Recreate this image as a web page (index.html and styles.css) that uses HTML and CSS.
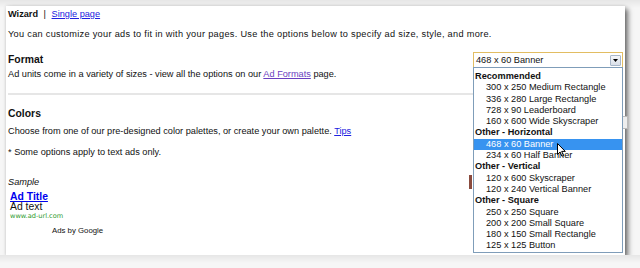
FILE: index.html
```html
<!DOCTYPE html>
<html lang="en">
<head>
    <meta charset="UTF-8">
    <title>Ad Wizard</title>
    <link rel="stylesheet" href="styles.css">
</head>
<body>
    <div class="page">
        <div class="nav"><b>Wizard</b> <span class="sep">|</span> <a href="#">Single page</a></div>
        <p class="intro">You can customize your ads to fit in with your pages. Use the options below to specify ad size, style, and more.</p>

        <div class="format-row">
            <h3>Format</h3>
            <div class="select">
                <span>468 x 60 Banner</span>
                <span class="arrow"><svg width="5" height="3" viewBox="0 0 5 3"><path d="M0 0h5L2.5 3z" fill="#000"/></svg></span>
            </div>
        </div>
        <p class="desc">Ad units come in a variety of sizes - view all the options on our <a class="visited" href="#">Ad Formats</a> page.</p>
        <div class="rule"></div>

        <h3 class="colors">Colors</h3>
        <p class="desc">Choose from one of our pre-designed color palettes, or create your own palette. <a href="#">Tips</a></p>
        <p class="note">* Some options apply to text ads only.</p>

        <p class="sample-label">Sample</p>
        <div class="sample">
            <a class="ad-title" href="#">Ad Title</a>
            <div class="ad-text">Ad text</div>
            <div class="ad-url">www.ad-url.com</div>
            <div class="ads-by">Ads by Google</div>
        </div>

        <div class="swatch"></div>
        <div class="behind-btn"></div>

        <ul class="dropdown">
            <li class="group">Recommended</li>
            <li>300 x 250 Medium Rectangle</li>
            <li>336 x 280 Large Rectangle</li>
            <li>728 x 90 Leaderboard</li>
            <li>160 x 600 Wide Skyscraper</li>
            <li class="group">Other - Horizontal</li>
            <li class="active">468 x 60 Banner</li>
            <li>234 x 60 Half Banner</li>
            <li class="group">Other - Vertical</li>
            <li>120 x 600 Skyscraper</li>
            <li>120 x 240 Vertical Banner</li>
            <li class="group">Other - Square</li>
            <li>250 x 250 Square</li>
            <li>200 x 200 Small Square</li>
            <li>180 x 150 Small Rectangle</li>
            <li>125 x 125 Button</li>
        </ul>

        <svg class="cursor" width="9" height="14" viewBox="0 0 9 14">
            <path d="M0.5 0.5v11l2.6-2.5 1.8 4.2 1.6-0.7-1.8-4.1h3.6z" fill="#fff" stroke="#000" stroke-width="1" stroke-linejoin="round"/>
        </svg>
    </div>
</body>
</html>
```

FILE: styles.css
```css
body {
    margin: 0;
    background: linear-gradient(#e6e6e6, #f6f6f6 8px);
    font-family: "Liberation Sans", Arial, sans-serif;
    font-size: 9.2px;
    color: #111;
}
.page {
    position: relative;
    margin: 6px 0 0 6px;
    width: 615px;
    height: 247px;
    padding: 2px 2px 0 2px;
    background: #fff;
    box-shadow: 3px 3px 5px rgba(0, 0, 0, 0.55), 0 0 3px rgba(0, 0, 0, 0.12);
}
a {
    color: #2020e0;
}
a.visited {
    color: #6a3fc0;
}
p, h3 {
    margin: 0;
}
.nav {
    line-height: 12px;
}
.sep {
    margin: 0 3px;
}
.intro {
    margin-top: 8px;
    line-height: 12px;
    letter-spacing: 0.3px;
}
.format-row {
    display: flex;
    justify-content: space-between;
    align-items: center;
    margin-top: 12px;
    height: 16px;
}
h3 {
    font-size: 10.4px;
    font-weight: bold;
    line-height: 12px;
}
.select {
    display: flex;
    justify-content: space-between;
    align-items: center;
    box-sizing: border-box;
    width: 150px;
    height: 16px;
    padding: 0 1px 0 2px;
    border: 1px solid #e2bd62;
    background: #fff;
}
.arrow {
    display: flex;
    align-items: center;
    justify-content: center;
    width: 11px;
    height: 11px;
    box-sizing: border-box;
    border: 1px solid #a9b7c9;
    border-radius: 1px;
    background: linear-gradient(#f4f6fa, #d9dfe8);
}
.desc {
    line-height: 12px;
}
.rule {
    margin-top: 13px;
    width: 465px;
    height: 2px;
    background: #e6e6e6;
}
.colors {
    margin-top: 13px;
}
.colors + .desc {
    margin-top: 5px;
}
.note {
    margin-top: 9px;
    line-height: 12px;
}
.sample-label {
    margin-top: 18px;
    line-height: 12px;
    font-style: italic;
}
.sample {
    margin-top: 3px;
    padding-left: 2px;
}
.ad-title {
    display: block;
    font-size: 10.4px;
    font-weight: bold;
    line-height: 11px;
    color: #0000ee;
}
.ad-text {
    font-size: 10.4px;
    line-height: 10px;
}
.ad-url {
    font-family: "DejaVu Sans", Verdana, sans-serif;
    font-size: 6.6px;
    line-height: 8px;
    color: #2e9a2e;
}
.ads-by {
    margin-top: 6px;
    padding-left: 42px;
    font-size: 7.8px;
    line-height: 10px;
}
.swatch {
    position: absolute;
    left: 463px;
    top: 169px;
    width: 3px;
    height: 14px;
    background: #8a4b3e;
}
.behind-btn {
    position: absolute;
    left: 616px;
    top: 110px;
    width: 4px;
    height: 11px;
    border: 1px solid #bbb;
    background: #eee;
}
.dropdown {
    position: absolute;
    left: 467px;
    top: 61px;
    width: 148px;
    margin: 0;
    padding: 3px 0 0 0;
    list-style: none;
    border: 1px solid #7f9db9;
    background: #fff;
}
.dropdown li {
    height: 11.3px;
    line-height: 11.3px;
    padding-left: 12px;
    white-space: nowrap;
}
.dropdown li.group {
    padding-left: 1px;
    font-weight: bold;
}
.dropdown li.active {
    background: #3793f0;
    color: #fff;
}
.cursor {
    position: absolute;
    left: 551px;
    top: 137px;
}
```
